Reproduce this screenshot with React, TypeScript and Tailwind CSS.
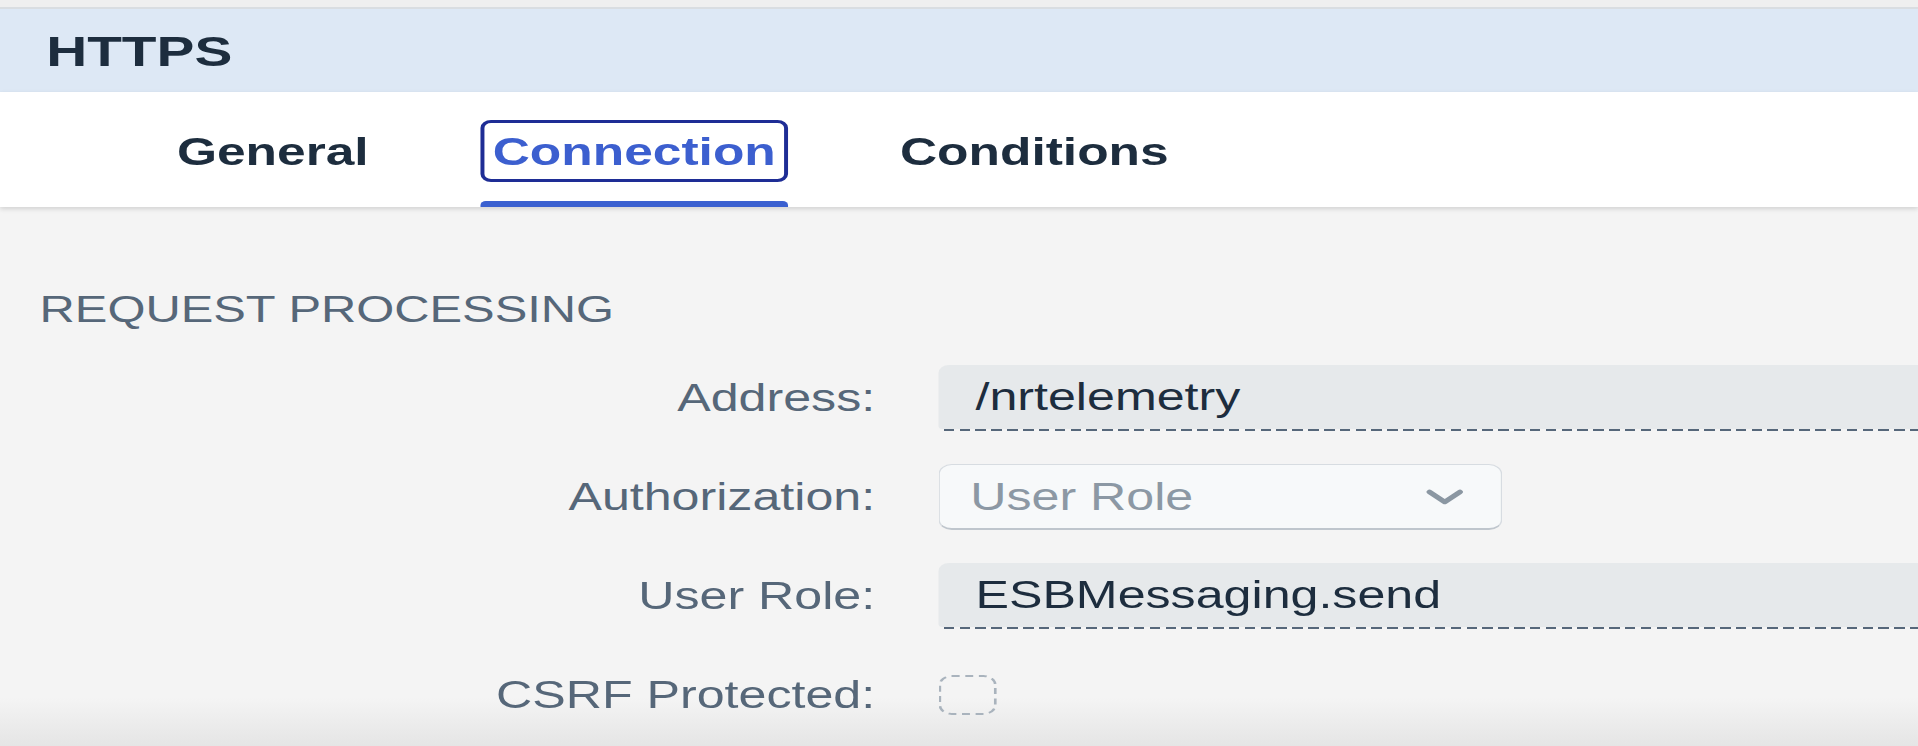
import type { ReactNode } from 'react'

// the reference capture is stretched sideways, so the page is laid out narrow and widened once
const PAGE_WIDTH = 'w-[1453px]'

function Tab({ label, active }: { label: string; active?: boolean }) {
  return (
    <div className="flex flex-col">
      <div
        className={`flex h-[62px] items-center rounded-[8px] border-[3px] px-[6px] ${
          active ? 'border-[#1e2d95] text-[#3c5fcf]' : 'border-transparent text-[#1d2d3e]'
        }`}
      >
        <span className="text-[39px] font-bold leading-[39px]">{label}</span>
      </div>
      <div className={`mt-[19px] h-[6px] rounded-t-[4px] ${active ? 'bg-[#3a60d0]' : 'bg-transparent'}`} />
    </div>
  )
}

function Label({ children }: { children: ReactNode }) {
  return <div className="text-right text-[38px] leading-[38px] text-[#566779]">{children}</div>
}

function DisplayField({ value }: { value: string }) {
  return (
    <div className="mr-[-24px] flex flex-col">
      <div className="flex h-[64px] items-center rounded-t-[8px] rounded-b-[3px] bg-[#e6e9eb] pl-[28px] text-[38px] leading-[38px] text-[#1d2d3e]">
        {value}
      </div>
      <div className="mx-[4px] h-[2px] bg-[repeating-linear-gradient(90deg,#56677a_0px,#56677a_8px,transparent_8px,transparent_12px)]" />
    </div>
  )
}

function SelectField({ placeholder }: { placeholder: string }) {
  return (
    <div className="flex h-[66px] w-[427px] items-center justify-between rounded-[10px] border border-b-2 border-[#d7dce1] border-b-[#bfc6cd] bg-[#f7f9fa] pl-[23px] pr-[28px]">
      <span className="text-[38px] leading-[38px] text-[#8c98a4]">{placeholder}</span>
      <svg width="29" height="16" viewBox="0 0 29 16" fill="none">
        <path d="M3 3 L14.5 13 L26 3" stroke="#8b97a2" strokeWidth="4.5" strokeLinecap="round" strokeLinejoin="round" />
      </svg>
    </div>
  )
}

export default function App() {
  return (
    <div className="h-[746px] w-screen overflow-hidden bg-[#f4f4f4]">
      <div className={`${PAGE_WIDTH} h-[746px] origin-top-left scale-x-[1.32] flex flex-col font-['Liberation_Sans',Arial,sans-serif]`}>
        <div className="h-[9px] shrink-0 border-b-2 border-[#d9dde1] bg-[#efefef]" />

        <div className="h-[83px] shrink-0 bg-[#dde8f5] pl-[35px] pt-[21px]">
          <h1 className="text-[43px] font-bold leading-[43px] text-[#1d2d3e]">HTTPS</h1>
        </div>

        <div className="relative z-10 flex h-[115px] shrink-0 gap-[76px] bg-white pl-[125px] pt-[28px] shadow-[0_2px_4px_rgba(0,0,0,0.14)]">
          <Tab label="General" />
          <Tab label="Connection" active />
          <Tab label="Conditions" />
        </div>

        <div className="flex-1 bg-[linear-gradient(to_bottom,#f4f4f4_0%,#f4f4f4_91%,#e5e5e5_100%)] pl-[30px] pt-[85px]">
          <h2 className="text-[37px] leading-[36px] text-[#566779]">REQUEST PROCESSING</h2>

          <div className="-ml-[30px] mt-[37px] grid grid-cols-[663px_1fr] items-center gap-x-[48px] gap-y-[33px]">
            <Label>Address:</Label>
            <DisplayField value="/nrtelemetry" />

            <Label>Authorization:</Label>
            <SelectField placeholder="User Role" />

            <Label>User Role:</Label>
            <DisplayField value="ESBMessaging.send" />

            <Label>CSRF Protected:</Label>
            <div className="flex h-[66px] items-center">
              <div className="h-[40px] w-[44px] rounded-[10px] border-2 border-dashed border-[#a9b3bd]" />
            </div>
          </div>
        </div>
      </div>
    </div>
  )
}
